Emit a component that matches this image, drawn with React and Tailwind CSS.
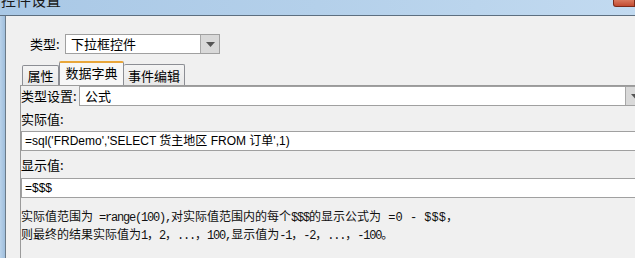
import React from "react";

const cjk = { fontFamily: '"Microsoft YaHei","Noto Sans CJK SC","Noto Sans",sans-serif' };
const mix = { fontFamily: '"Liberation Sans","Noto Sans CJK SC",sans-serif' };
const mono = { fontFamily: '"Liberation Mono","Noto Sans CJK SC",monospace', letterSpacing: "-1.2px" };
const monoWide = { fontFamily: '"Liberation Mono","Noto Sans CJK SC",monospace' };

function Arrow() {
  return (
    <svg width="9" height="5" viewBox="0 0 9 5">
      <path d="M0 0 L9 0 L4.5 5 Z" fill="#555" />
    </svg>
  );
}

export default function App() {
  return (
    <div className="w-[635px] h-[258px] overflow-hidden bg-[#f0f0f0] flex flex-col text-black" style={cjk}>
      {/* title bar */}
      <div className="h-[16px] shrink-0 flex justify-between bg-gradient-to-r from-[#a9c8e6] via-[#b4d0ea] to-[#c2daf0] border-b border-[#5d6f80] overflow-hidden">
        <div className="text-[15px] leading-[16px] -mt-[8px] pl-[1px] text-[#1a1a1a]">控件设置</div>
        <div className="w-[22px] h-[7px] bg-gradient-to-b from-[#d8785e] to-[#c24a30] rounded-bl-[3px] border border-t-0 border-[#7a2a1a]" />
      </div>
      <div className="flex flex-1">
        {/* window frame */}
        <div className="w-[6px] shrink-0 bg-gradient-to-r from-[#b9d2ea] to-[#9fbedc] border-r border-[#6b7a88]" />
        <div className="flex-1 flex flex-col min-w-0">
          <div className="h-[18px] shrink-0" />
          {/* type row */}
          <div className="h-[20px] flex items-center pl-[24px] shrink-0">
            <div className="w-[35px] text-[13px] leading-[20px]">类型:</div>
            <div className="flex h-[20px] w-[155px] border border-[#a0a0a0] bg-white">
              <div className="flex-1 text-[13px] leading-[18px] pl-[5px]">下拉框控件</div>
              <div className="w-[19px] bg-[#d9d9d9] border-l border-[#a8a8a8] flex items-center justify-center">
                <Arrow />
              </div>
            </div>
          </div>
          <div className="h-[7px] shrink-0" />
          {/* tabs */}
          <div className="h-[24px] flex items-end pl-[16px] shrink-0">
            <div className="h-[20px] w-[37px] border border-b-0 border-[#8c8e94] rounded-t-[2px] bg-gradient-to-b from-[#f4f4f4] to-[#e8e8e8] text-[13px] leading-[20px] text-center">属性</div>
            <div className="h-[24px] w-[65px] border border-b-0 border-[#8c8e94] border-t-2 border-t-[#e8a63a] rounded-t-[2px] bg-[#f7f7f7] text-[13px] leading-[20px] text-center">数据字典</div>
            <div className="h-[21px] w-[61px] border border-b-0 border-l-0 border-[#8c8e94] rounded-t-[2px] bg-gradient-to-b from-[#f4f4f4] to-[#e8e8e8] text-[13px] leading-[21px] text-center">事件编辑</div>
          </div>
          {/* panel */}
          <div className="flex-1 ml-[14px] border-l border-t border-[#9a9a9a] flex flex-col min-w-0">
            <div className="h-[20px] flex items-center shrink-0">
              <div className="w-[58px] text-[13px] leading-[20px]">类型设置:</div>
              <div className="flex-1 flex h-[20px] border border-[#a0a0a0] bg-white -mr-[10px]">
                <div className="flex-1 text-[13px] leading-[18px] pl-[5px]">公式</div>
                <div className="w-[19px] bg-[#d9d9d9] border-l border-[#a8a8a8] flex items-center justify-center">
                  <Arrow />
                </div>
              </div>
            </div>
            <div className="h-[25px] text-[13px] leading-[25px] shrink-0">实际值:</div>
            <div className="h-[20px] border-y border-l border-[#a0a0a0] bg-white text-[12px] leading-[18px] pl-[3px] shrink-0 whitespace-nowrap" style={mix}>
              =sql('FRDemo','SELECT 货主地区 FROM 订单',1)
            </div>
            <div className="h-[27px] text-[13px] leading-[27px] shrink-0">显示值:</div>
            <div className="h-[20px] border-y border-l border-[#a0a0a0] bg-white text-[12px] leading-[18px] pl-[3px] shrink-0" style={mix}>
              =$$$
            </div>
            <div className="pt-[10px] text-[12px] leading-[16px] whitespace-nowrap text-[#111]">
              <div>
                实际值范围为<span style={mono}> =range(100),</span>对实际值范围内的每个<span style={mono}>$$$</span>的显示公式为<span style={monoWide}> =0 - $$$</span>，
              </div>
              <div>
                则最终的结果实际值为<span style={mono}>1</span>，<span style={mono}>2</span>，<span style={mono}>...</span>，<span style={mono}>100,</span>显示值为<span style={mono}>-1</span>，<span style={mono}>-2</span>，<span style={mono}>...</span>，<span style={mono}>-100</span>。
              </div>
            </div>
          </div>
        </div>
      </div>
    </div>
  );
}
